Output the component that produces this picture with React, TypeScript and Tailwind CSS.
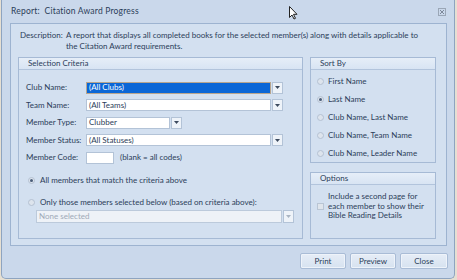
import React from 'react';

const font = { fontFamily: 'Lato, "Noto Sans", sans-serif' };

const Radio: React.FC<{ checked?: boolean }> = ({ checked }) => (
  <span className="flex items-center justify-center w-[7px] h-[7px] rounded-full border border-[#b4c1d2] bg-[#dde4ed] shrink-0">
    {checked && <span className="w-[3px] h-[3px] rounded-full bg-[#4a5d78]" />}
  </span>
);

const DropButton: React.FC<{ disabled?: boolean }> = ({ disabled }) => (
  <span className="flex items-center justify-center w-[11px] h-full border border-[#b3c3d7] bg-[#eef3f9] ml-[1px]">
    <svg width="5" height="3" viewBox="0 0 5 3">
      <path d="M0 0h5L2.5 3z" fill={disabled ? '#a9b4c2' : '#3c4a5e'} />
    </svg>
  </span>
);

const Combo: React.FC<{ value: string; width: string; selected?: boolean }> = ({ value, width, selected }) => (
  <div className={`flex h-[12px] ${width}`}>
    <div
      className={
        selected
          ? 'flex-1 flex items-center px-[2px] bg-[#0a66d6] text-white border border-[#b7a58e]'
          : 'flex-1 flex items-center px-[2px] bg-white border border-[#b3c3d7]'
      }
    >
      {value}
    </div>
    <DropButton />
  </div>
);

const GroupHeader: React.FC<{ title: string }> = ({ title }) => (
  <div className="h-[12px] flex items-center pl-[9px] bg-gradient-to-b from-[#e6eef8] to-[#d8e4f3] border-b border-[#b2c4dc]">
    {title}
  </div>
);

const Row: React.FC<{ label: string; children: React.ReactNode }> = ({ label, children }) => (
  <div className="h-[17.5px] flex items-center">
    <span className="w-[60px] shrink-0 whitespace-nowrap">{label}</span>
    {children}
  </div>
);

export default function App() {
  return (
    <div className="relative w-[457px] h-[280px] bg-[#e6dfd2] overflow-hidden text-[8px] leading-[11px] text-[#2b3d59]" style={font}>
      <div className="ml-[1px] w-[454px] h-[279px] flex flex-col border-x border-b border-[#8ea4c0] rounded-b-[5px] bg-[#cad8eb]">
        {/* Title bar */}
        <div className="h-[23px] flex items-center pl-[9px] pr-[8px] justify-between">
          <span className="text-[8.5px] tracking-[0.2px]">Report:&nbsp;&nbsp;Citation Award Progress</span>
          <svg width="8" height="8" viewBox="0 0 8 8" className="mt-[1px]">
            <rect x="0.5" y="0.5" width="7" height="7" fill="none" stroke="#9aa6b6" />
            <path d="M2 2l4 4M6 2l-4 4" stroke="#7d8899" strokeWidth="1" />
          </svg>
        </div>

        {/* Panel */}
        <div className="ml-[8px] w-[437px] h-[223px] border border-[#9db3d0] bg-[#d3e0f0] pt-[6px]">
          <div className="flex pl-[9px]">
            <span className="w-[46px] shrink-0 whitespace-nowrap">Description:</span>
            <span className="w-[365px]">
              A report that displays all completed books for the selected member(s) along with details applicable to the Citation Award requirements.
            </span>
          </div>

          <div className="flex mt-[5px] ml-[7px] gap-[7px]">
            {/* Selection Criteria */}
            <div className="w-[285px] h-[182px] border border-[#a6bad5] bg-[#d3e0f0]">
              <GroupHeader title="Selection Criteria" />
              <div className="pl-[7px] pt-[9px]">
                <Row label="Club Name:">
                  <Combo value="(All Clubs)" width="w-[197px]" selected />
                </Row>
                <Row label="Team Name:">
                  <Combo value="(All Teams)" width="w-[197px]" />
                </Row>
                <Row label="Member Type:">
                  <Combo value="Clubber" width="w-[96px]" />
                </Row>
                <Row label="Member Status:">
                  <Combo value="(All Statuses)" width="w-[197px]" />
                </Row>
                <Row label="Member Code:">
                  <span className="w-[28px] h-[12px] bg-white border border-[#b3c3d7]" />
                  <span className="ml-[6px]">(blank = all codes)</span>
                </Row>
                <div className="flex items-center h-[12px] mt-[8px] pl-[2px] gap-[5px]">
                  <Radio checked />
                  <span>All members that match the criteria above</span>
                </div>
                <div className="flex items-center h-[12px] mt-[10px] pl-[2px] gap-[5px]">
                  <Radio />
                  <span>Only those members selected below (based on criteria above):</span>
                </div>
                <div className="flex h-[13px] w-[258px] ml-[10px] mt-[1px]">
                  <div className="flex-1 flex items-center px-[2px] bg-[#eef2f7] text-[#a0aab8] border border-[#bccadb]">
                    None selected
                  </div>
                  <DropButton disabled />
                </div>
              </div>
            </div>

            {/* Right column */}
            <div className="flex flex-col w-[126px]">
              <div className="h-[106px] border border-[#a6bad5]">
                <GroupHeader title="Sort By" />
                <div className="pl-[6px] pt-[2px]">
                  {['First Name', 'Last Name', 'Club Name, Last Name', 'Club Name, Team Name', 'Club Name, Leader Name'].map((s, i) => (
                    <div key={s} className="h-[18px] flex items-center gap-[4px]">
                      <Radio checked={i === 1} />
                      <span>{s}</span>
                    </div>
                  ))}
                </div>
              </div>
              <div className="mt-[9px] h-[67px] border border-[#a6bad5]">
                <GroupHeader title="Options" />
                <div className="flex items-center pl-[6px] pt-[7px] gap-[4px]">
                  <span className="w-[7px] h-[7px] border border-[#b9c5d4] bg-[#dfe5ec] shrink-0" />
                  <span className="leading-[9.5px]">
                    Include a second page for
                    <br />
                    each member to show their
                    <br />
                    Bible Reading Details
                  </span>
                </div>
              </div>
            </div>
          </div>
        </div>

        {/* Buttons */}
        <div className="flex justify-end gap-[4px] mt-[7px] pr-[6px]">
          {['Print', 'Preview', 'Close'].map((b) => (
            <button
              key={b}
              className={`${b === 'Close' ? 'w-[48px]' : 'w-[46px]'} h-[16px] flex items-center justify-center rounded-[2px] border border-[#a9bcd6] bg-gradient-to-b from-[#e6edf7] to-[#d6e2f0] shadow-[inset_0_0_0_1px_#eef3fa] text-[#2b3d59]`}
            >
              {b}
            </button>
          ))}
        </div>
      </div>

      {/* Mouse cursor */}
      <svg className="absolute left-[289px] top-[6px]" width="9" height="14" viewBox="0 0 9 14">
        <path d="M0.5 0.5v11l2.5-2.5 2 4 1.5-0.7-2-4h3.5z" fill="#fff" stroke="#222" strokeWidth="1" strokeLinejoin="round" />
      </svg>
    </div>
  );
}
